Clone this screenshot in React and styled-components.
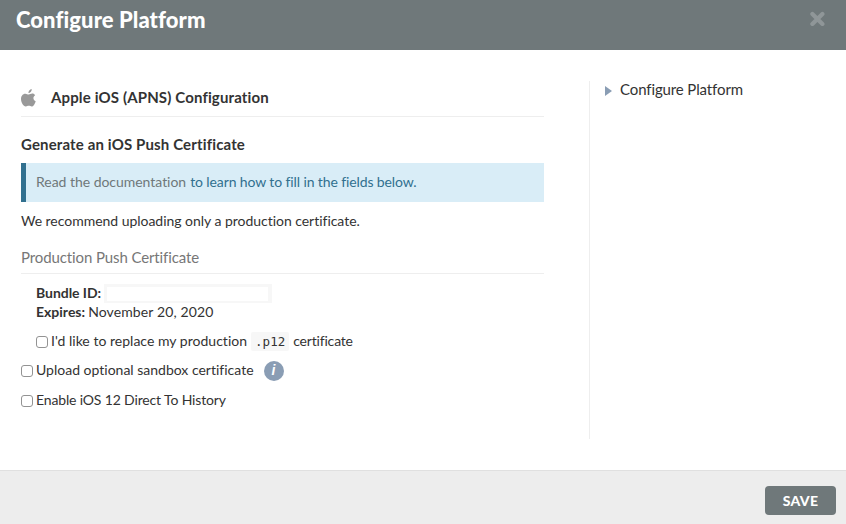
import React from "react";
import styled, { createGlobalStyle } from "styled-components";

const GlobalStyle = createGlobalStyle`
  *, *::before, *::after { box-sizing: border-box; }
  body {
    margin: 0;
    background: #fff;
    color: #333;
    font-family: Lato, "Liberation Sans", sans-serif;
    font-size: 14px;
    line-height: 20px;
    font-variant-ligatures: none;
  }
`;

const Dialog = styled.div`
  display: flex;
  flex-direction: column;
  height: 100vh;
  overflow: hidden;
`;

const Header = styled.header`
  display: flex;
  flex: none;
  justify-content: space-between;
  height: 50px;
  padding: 5px 21px 0 16px;
  background: #6f787a;
`;

const Title = styled.h1`
  margin: 0;
  color: #fff;
  font-size: 22px;
  font-weight: 900;
  line-height: 30px;
  letter-spacing: ${(p) => p.$tracking}px;
`;

const CloseButton = styled.button`
  height: 15px;
  margin-top: 6px;
  padding: 0;
  border: 0;
  background: none;
  line-height: 0;
`;

const Body = styled.main`
  display: flex;
  flex: 1;
  padding: 31px 21px 31px;
`;

const Content = styled.section`
  width: 523px;
  margin-right: 45px;
`;

const Sidebar = styled.aside`
  flex: 1;
  border-left: 1px solid #eee;
  padding-left: 15px;
`;

const Text = styled.span`
  letter-spacing: ${(p) => p.$tracking || 0}px;
`;

const SidebarLink = styled.div`
  display: flex;
  align-items: center;
  gap: 8px;
  height: 16px;
  font-size: 15px;

  svg { margin-top: 3px; }
`;

const PlatformHeading = styled.h2`
  display: flex;
  align-items: center;
  height: 36px;
  margin: 0;
  padding-bottom: 3px;
  border-bottom: 1px solid #eee;
  font-size: 15px;
  font-weight: 700;

  svg { flex: none; margin: 1px 15px 0 0; }
`;

const SectionHeading = styled.h3`
  margin: 17px 0 9px;
  font-size: 15px;
  font-weight: 700;
  line-height: 20px;
`;

const Notice = styled.div`
  height: 39px;
  padding-left: 10px;
  border-left: 5px solid #31708f;
  background: #d9edf7;
  color: #31708f;
  line-height: 37px;
`;

const NoticeLink = styled.a`
  margin-right: 4px;
  color: #6f787a;
  letter-spacing: ${(p) => p.$tracking}px;
`;

const Paragraph = styled.p`
  margin: 9px 0 0;
`;

const Legend = styled.h4`
  height: 27px;
  margin: 16px 0 0;
  border-bottom: 1px solid #eee;
  color: #777;
  font-size: 15px;
  font-weight: 400;
`;

const Details = styled.div`
  padding: 10px 0 0 15px;
`;

const DetailRow = styled.div`
  display: flex;
  align-items: flex-start;
  height: 19px;
  line-height: 17px;
`;

const DetailLabel = styled.strong`
  margin-right: ${(p) => p.$gap}px;
  letter-spacing: ${(p) => p.$tracking}px;
`;

const BundleField = styled.span`
  width: 168px;
  height: 19px;
  border: solid #f7f7f7;
  border-width: 3px 4px 2px 3px;
`;

const CheckRow = styled.label`
  display: flex;
  align-items: center;
  height: 20px;
  margin-top: ${(p) => p.$top}px;
`;

const Checkbox = styled.input.attrs({ type: "checkbox" })`
  appearance: none;
  flex: none;
  width: 12px;
  height: 12px;
  margin: 1px 3px 0 0;
  border: 1px solid #939393;
  border-radius: 3px;
  background: #fff;
`;

const Code = styled.code`
  height: 19px;
  margin: 0 4px;
  padding: 0 4px;
  border-radius: 2px;
  background: #f7f7f7;
  font-family: "DejaVu Sans Mono", monospace;
  font-size: 12.5px;
  line-height: 19px;
`;

const InfoBadge = styled.span`
  width: 20px;
  height: 20px;
  margin: 2px 0 0 10px;
  border-radius: 50%;
  background: #8a9db4;
  color: #fff;
  font-family: "Liberation Sans", sans-serif;
  font-size: 14px;
  font-style: italic;
  font-weight: 700;
  line-height: 19px;
  text-align: center;
`;

const Footer = styled.footer`
  display: flex;
  flex: none;
  justify-content: flex-end;
  height: 54px;
  padding: 15px 10px 0;
  border-top: 1px solid #e0e0e0;
  background: #ededed;
`;

const SaveButton = styled.button`
  width: 71px;
  height: 29px;
  padding: 0;
  border: 0;
  border-radius: 4px;
  background: #6f787a;
  color: #fff;
  font-family: inherit;
  font-size: 14px;
  font-weight: 900;
  letter-spacing: 0.25px;
`;

const CloseIcon = () => (
  <svg width="15" height="15" viewBox="0 0 15 15">
    <path d="M2.4 2.9 12.4 12.9M12.4 2.9 2.4 12.9" stroke="#8f9698" strokeWidth="4.2" strokeLinecap="round" />
  </svg>
);

const AppleIcon = () => (
  <svg width="15" height="18" viewBox="0 0 15 18" fill="#999">
    <path d="M7.4 4.1C7.3 2.1 8.8.3 10.7 0c.3 2.2-1.3 4.1-3.3 4.1Z" />
    <path d="M14.1 6.2c-2.5 1.5-2.1 4.8.6 6-.6 2-2.1 5.3-4 5.3-1 0-1.6-.7-2.9-.7s-1.9.7-2.9.7C2.3 17.5 0 13.4 0 10c0-3.2 2-5.3 4.3-5.3 1.4 0 2.3.8 3.4.8 1 0 2.1-.9 3.6-.9 1.2 0 2.2.6 2.8 1.6Z" />
  </svg>
);

const ArrowIcon = () => (
  <svg width="7" height="10" viewBox="0 0 7 10">
    <path d="M0 0 7 5 0 10Z" fill="#8a9db4" />
  </svg>
);

export default function App() {
  return (
    <Dialog>
      <GlobalStyle />
      <Header>
        <Title $tracking={0.08}>Configure Platform</Title>
        <CloseButton aria-label="Close"><CloseIcon /></CloseButton>
      </Header>
      <Body>
        <Content>
          <PlatformHeading>
            <AppleIcon />
            <Text $tracking={0.14}>Apple iOS (APNS) Configuration</Text>
          </PlatformHeading>
          <SectionHeading><Text $tracking={0.14}>Generate an iOS Push Certificate</Text></SectionHeading>
          <Notice>
            <NoticeLink $tracking={-0.03}>Read the documentation</NoticeLink>
            <Text $tracking={-0.11}>to learn how to fill in the fields below.</Text>
          </Notice>
          <Paragraph><Text $tracking={-0.03}>We recommend uploading only a production certificate.</Text></Paragraph>
          <Legend><Text $tracking={-0.11}>Production Push Certificate</Text></Legend>
          <Details>
            <DetailRow>
              <DetailLabel $gap={3} $tracking={-0.05}>Bundle ID:</DetailLabel>
              <BundleField />
            </DetailRow>
            <DetailRow>
              <DetailLabel $gap={3} $tracking={0}>Expires:</DetailLabel>
              <Text $tracking={0.12}>November 20, 2020</Text>
            </DetailRow>
            <CheckRow $top={9}>
              <Checkbox />
              <Text $tracking={0.02}>I'd like to replace my production</Text>
              <Code>.p12</Code>
              <Text $tracking={-0.18}>certificate</Text>
            </CheckRow>
          </Details>
          <CheckRow $top={9}>
            <Checkbox />
            <Text>Upload optional sandbox certificate</Text>
            <InfoBadge>i</InfoBadge>
          </CheckRow>
          <CheckRow $top={10}>
            <Checkbox />
            <Text $tracking={-0.15}>Enable iOS 12 Direct To History</Text>
          </CheckRow>
        </Content>
        <Sidebar>
          <SidebarLink>
            <ArrowIcon />
            <Text $tracking={-0.12}>Configure Platform</Text>
          </SidebarLink>
        </Sidebar>
      </Body>
      <Footer>
        <SaveButton>SAVE</SaveButton>
      </Footer>
    </Dialog>
  );
}
